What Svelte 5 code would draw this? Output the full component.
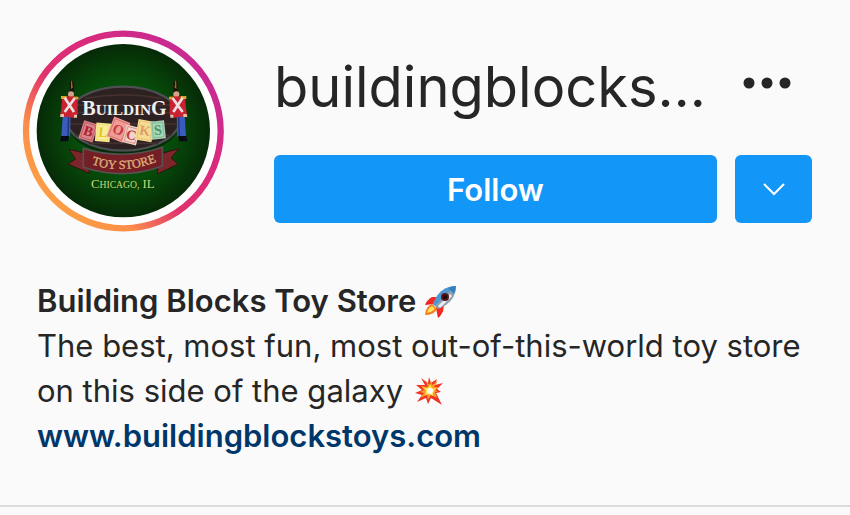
<script>
    const username = "buildingblocks…";
    const fullName = "Building Blocks Toy Store";
    const website = "www.buildingblockstoys.com";

    // lettered cubes in the middle of the sign
    const cubes = [
        { letter: "B", x: 199, y: 304, turn: 18, size: 44, face: "#d9868a", ink: "#a91f32" },
        { letter: "L", x: 243, y: 307, turn: 5, size: 44, face: "#f7ee9d", ink: "#e8c51c" },
        { letter: "O", x: 289, y: 299, turn: 22, size: 52, face: "#ee9c95", ink: "#c8373b" },
        { letter: "C", x: 328, y: 315, turn: 14, size: 42, face: "#f0d5c8", ink: "#c43842" },
        { letter: "K", x: 369, y: 302, turn: 10, size: 50, face: "#f5dc91", ink: "#df9b68" },
        { letter: "S", x: 408, y: 300, turn: -6, size: 42, face: "#a9d5b5", ink: "#45966e" },
    ];
</script>

<style>
    :global(body) {
        margin: 0;
        background: #fafafa;
    }

    .profile {
        box-sizing: border-box;
        padding: 30px 38px 47px 22px;
        border-bottom: 2px solid #dbdbdb;
        color: #262626;
        font-family: Inter, "Liberation Sans", sans-serif;
    }

    header {
        display: flex;
        gap: 50px;
    }

    .avatar {
        flex: none;
        width: 202px;
        height: 202px;
    }

    .details {
        flex: 1;
        min-width: 0;
    }

    .title,
    .actions {
        display: flex;
    }

    .title {
        align-items: center;
        justify-content: space-between;
        height: 106px;
        padding-right: 12px;
    }

    h2 {
        margin: 0;
        padding-top: 8px;
        font-size: 56px;
        font-weight: 400;
        line-height: 72px;
        white-space: nowrap;
    }

    button {
        border: 0;
        padding: 0;
        font-family: inherit;
        cursor: pointer;
    }

    .more {
        display: flex;
        padding: 8px;
        background: none;
        color: #262626;
    }

    .actions {
        gap: 18px;
        margin-top: 19px;
    }

    .actions button {
        display: flex;
        align-items: center;
        justify-content: center;
        height: 68px;
        border-radius: 6px;
        background: #1296f8;
        color: #fff;
        font-size: 31px;
        font-weight: 600;
    }

    .actions .follow {
        flex: 1;
    }

    .actions .suggest {
        width: 77px;
    }

    .bio {
        margin-top: 46px;
        padding-left: 15px;
        font-size: 31px;
        line-height: 45px;
    }

    h1,
    p {
        margin: 0;
        font-size: inherit;
        line-height: inherit;
    }

    h1 {
        font-weight: 600;
    }

    .emoji {
        width: 34px;
        height: 34px;
        vertical-align: -6px;
    }

    a {
        display: block;
        color: #00376b;
        font-weight: 600;
        text-decoration: none;
    }

    .sign-text {
        font-family: "Liberation Serif", serif;
    }
</style>

<section class="profile">
    <header>
        <svg class="avatar" viewBox="0 0 606 606" role="img" aria-label="Profile photo">
            <defs>
                <linearGradient id="ring" x1="0.12" y1="0.88" x2="0.88" y2="0.12">
                    <stop offset="0" stop-color="#fca044" />
                    <stop offset="0.2" stop-color="#fb8d4a" />
                    <stop offset="0.42" stop-color="#e0326d" />
                    <stop offset="0.7" stop-color="#d92b7d" />
                    <stop offset="1" stop-color="#c62a94" />
                </linearGradient>
                <radialGradient id="felt">
                    <stop offset="0" stop-color="#075c0b" />
                    <stop offset="0.6" stop-color="#064a0a" />
                    <stop offset="1" stop-color="#062a07" />
                </radialGradient>
                <path id="banner-line" d="M206 402 Q304 436 406 394" />
                <g id="soldier">
                    <path d="M144 186 L143 158 L149 148 L156 160 L155 188Z" fill="#19120b" />
                    <path d="M147 155 L150 150 L152 172 L147 178Z" fill="#a8661f" />
                    <circle cx="147" cy="193" r="9" fill="#d9a08d" />
                    <path d="M122 258 H146 L144 322 H118Z" fill="#395cbd" />
                    <path d="M140 258 L138 322" stroke="#1d3478" stroke-width="4" />
                    <path d="M117 318 H142 L138 334 H114Z" fill="#090c17" />
                    <path d="M121 198 L167 200 L167 256 L158 264 L114 258 L118 236Z" fill="#c92332" />
                    <path d="M117 198 H134 V207 H117Z M155 200 H169 V208 H155Z" fill="#d9a62e" />
                    <path d="M128 203 L156 246 M158 205 L128 246" stroke="#eddfe0" stroke-width="8" />
                    <path d="M116 252 H126 V261 H114Z M156 254 H165 V263 H156Z" fill="#e3c0a8" />
                </g>
            </defs>
            <circle cx="304" cy="303" r="300" fill="#fff" />
            <circle cx="304" cy="303" r="292" fill="none" stroke="url(#ring)" stroke-width="19" />
            <circle cx="304" cy="302" r="260" fill="url(#felt)" />

            <ellipse cx="304" cy="272" rx="172" ry="102" fill="#052b07" />
            <ellipse cx="304" cy="266" rx="170" ry="96" fill="#2e2122" stroke="#4c4f51" stroke-width="7" />
            <path
                d="M190 205 Q304 184 418 205 M164 225 H448 M148 248 H460 M144 282 H464 M160 316 H450 M200 340 H408"
                fill="none"
                stroke="#44302e"
                stroke-width="5"
            />

            <path d="M141 358 L200 372 L202 430 L138 402 L161 387Z" fill="#7c252a" stroke="#36120f" stroke-width="3" />
            <path d="M471 356 L412 372 L406 432 L468 402 L447 384Z" fill="#7c252a" stroke="#36120f" stroke-width="3" />
            <path
                d="M184 355 Q304 392 421 352 L421 408 Q304 452 184 412Z"
                fill="#731f25"
                stroke="#555352"
                stroke-width="5"
            />

            <use href="#soldier" />
            <use href="#soldier" transform="translate(610 0) scale(-1 1)" />

            <text class="sign-text" x="181" y="256" font-size="60" font-weight="700" fill="#f0f0f0"
                >B<tspan font-size="46">UILDIN</tspan>G</text
            >

            {#each cubes as cube}
                <g transform="translate({cube.x} {cube.y}) rotate({cube.turn})">
                    <rect
                        x={-cube.size / 2}
                        y={-cube.size / 2 - 6}
                        width={cube.size}
                        height={cube.size + 12}
                        fill={cube.face}
                    />
                    <rect
                        x={5 - cube.size / 2}
                        y={-1 - cube.size / 2}
                        width={cube.size - 10}
                        height={cube.size + 2}
                        fill="none"
                        stroke={cube.ink}
                        stroke-width="2"
                        opacity="0.6"
                    />
                    <text
                        class="sign-text"
                        y="14"
                        text-anchor="middle"
                        font-size="42"
                        font-weight="700"
                        fill={cube.ink}>{cube.letter}</text
                    >
                </g>
            {/each}

            <text class="sign-text" font-size="37" fill="#dfae7b" stroke="#dfae7b">
                <textPath href="#banner-line" startOffset="50%" text-anchor="middle">TOY STORE</textPath>
            </text>
            <text class="sign-text" x="207" y="473" font-size="38" fill="#c9d879"
                >C<tspan font-size="29">HICAGO,</tspan> IL</text
            >
        </svg>

        <div class="details">
            <div class="title">
                <h2>{username}</h2>
                <button class="more" aria-label="Options">
                    <svg width="50" height="12" viewBox="0 0 50 12" fill="currentColor">
                        <circle cx="7" cy="6" r="5.5" />
                        <circle cx="25" cy="6" r="5.5" />
                        <circle cx="43" cy="6" r="5.5" />
                    </svg>
                </button>
            </div>
            <div class="actions">
                <button class="follow">Follow</button>
                <button class="suggest" aria-label="Similar accounts">
                    <svg width="22" height="14" viewBox="0 0 22 14" fill="none" stroke="currentColor" stroke-width="2">
                        <path d="M1 2 L11 12 L21 2" />
                    </svg>
                </button>
            </div>
        </div>
    </header>

    <div class="bio">
        <h1>
            {fullName}
            <svg class="emoji" viewBox="0 0 34 34" role="img" aria-label="rocket">
                <path d="M8 15 Q3 15 1 21 L10 20Z M18 25 Q20 29 14 34 L12 24Z" fill="#e92020" />
                <path d="M8 13 L16 13 L11 21 L3 18 Q5 14 8 13Z M20 20 L19 28 L14 31 L12 23Z" fill="#f32b23" />
                <path d="M8 20 Q2 22 1 31 Q10 31 13 25Z" fill="#f77b21" />
                <path d="M8 22 Q4 24 3 29 Q8 28 11 25Z" fill="#ffe35b" />
                <path d="M32 2 Q20 2 13 12 L9 20 L14 25 L22 21 Q32 14 32 2Z" fill="#8fa1ad" />
                <path d="M32 2 Q20 2 13 12 L9 20 L11 22 L28 5Z" fill="#4f97d2" />
                <path d="M32 2 Q28 2 24 4 L30 10 Q32 6 32 2Z" fill="#347fbd" />
                <path d="M15 23 L27 11" stroke="#e5edf0" stroke-width="3" />
                <circle cx="21" cy="13" r="4" fill="#5a1717" />
                <circle cx="21" cy="13" r="2" fill="#180b10" />
            </svg>
        </h1>
        <p>
            The best, most fun, most out-of-this-world toy store on this side of the galaxy
            <svg class="emoji" viewBox="0 0 34 34" role="img" aria-label="collision">
                <path
                    d="M13 11 L9 4 L16 9 L17 3 L19 9 L25 5 L23 11 L31 9 L25 15 L29 18 L24 19 L30 31 L19 24 L16 30 L14 24 L5 28 L10 21 L3 19 L10 16 L4 11Z"
                    fill="#ee3426"
                />
                <path
                    d="M16 13 L14 7 L18 11 L19 6 L20 11 L26 7 L22 13 L28 13 L23 16 L26 18 L23 18 L25 24 L19 21 L16 26 L15 21 L8 24 L12 19 L8 18 L12 16 L9 12Z"
                    fill="#ff9b29"
                />
                <path d="M18 10 L20 14 L24 15 L21 18 L21 22 L17 20 L13 21 L14 17 L12 14 L16 14Z" fill="#ffe34d" />
                <circle cx="18" cy="17" r="3" fill="#fff" />
            </svg>
        </p>
        <a href="http://www.buildingblockstoys.com">{website}</a>
    </div>
</section>
